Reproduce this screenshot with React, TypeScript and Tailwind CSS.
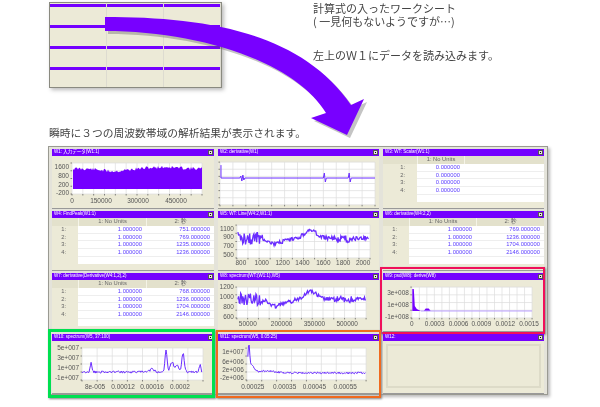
import React from "react";

const P = "#7400ff";
const L = "#6a2cff";
const ARROW = "M105 17 C 200 17 300 30 351 105 L364 99 L347 135 L311 118 L326 113 C 295 62 200 31 105 31 Z";

function rng(seed: number) {
  let s = seed;
  return () => {
    s = (s * 9301 + 49297) % 233280;
    return s / 233280;
  };
}

function Close() {
  return (
    <span className="flex h-[5px] w-[5px] items-center justify-center border border-[#555] bg-[#e8e6d8]">
      <span className="h-px w-px bg-black" />
    </span>
  );
}

function Panel({
  title,
  ring,
  children,
}: {
  title: string;
  ring?: string;
  children: React.ReactNode;
}) {
  return (
    <div className="relative flex min-h-0 flex-col bg-[#ecead7] shadow-[0_1px_0_#999]">
      <div className="flex h-[7px] shrink-0 items-center justify-between overflow-hidden bg-[#7400ff] pl-[2px] pr-px text-[4.5px] leading-none text-white">
        <span className="whitespace-nowrap">{title}</span>
        <Close />
      </div>
      <div className="min-h-0 flex-1 overflow-hidden">{children}</div>
      {ring && <div className={`pointer-events-none absolute shadow-[1px_1px_2px_#888] ${ring}`} />}
    </div>
  );
}

function DataTable({
  rows,
  col2 = true,
  widths,
}: {
  rows: string[][];
  col2?: boolean;
  widths: string;
}) {
  return (
    <div className={`grid h-full content-start text-[5.8px] leading-[7.7px] ${widths}`}>
      <div className="h-[8px] bg-[#e3e1cc]" />
      <div className="h-[8px] border-l border-[#f5f4e8] bg-[#e3e1cc] text-center text-[#666]">1: No Units</div>
      <div className="h-[8px] border-l border-[#f5f4e8] bg-[#e3e1cc] text-center text-[#666]">{col2 ? "2: 秒" : ""}</div>
      {rows.map((r, i) => (
        <React.Fragment key={i}>
          <div className="h-[7.7px] bg-[#ecead7] pr-[12px] text-right text-[#666]">{i + 1}:</div>
          <div className="h-[7.7px] border-b border-[#eeeeee] bg-white pr-[4px] text-right text-[#5a3cff]">{r[0]}</div>
          <div className="h-[7.7px] border-b border-[#eeeeee] bg-white pr-[4px] text-right text-[#5a3cff]">{r[1]}</div>
        </React.Fragment>
      ))}
      <div className="h-[7px] bg-[#ecead7]" />
      <div className="h-[7px] bg-white" />
      <div className="h-[7px] bg-white" />
    </div>
  );
}

type ChartProps = {
  plot: [number, number, number, number];
  yl: [string, number][];
  xl: [string, number][];
  xy: number;
  grid?: [number, number];
  children?: React.ReactNode;
};

function Chart({ plot, yl, xl, xy, grid = [8, 4], children }: ChartProps) {
  const [x0, y0, x1, y1] = plot;
  const gx = Array.from({ length: grid[0] + 1 }, (_, i) => x0 + ((x1 - x0) * i) / grid[0]);
  const gy = Array.from({ length: grid[1] + 1 }, (_, i) => y0 + ((y1 - y0) * i) / grid[1]);
  return (
    <svg viewBox="0 0 162 52" className="block h-[52px] w-full">
      <rect x={x0} y={y0} width={x1 - x0} height={y1 - y0} fill="#fff" />
      {gx.map((x, i) => (
        <line key={i} x1={x} x2={x} y1={y0} y2={y1} stroke="#dddddd" strokeWidth="0.7" />
      ))}
      {gy.map((y, i) => (
        <line key={i} x1={x0} x2={x1} y1={y} y2={y} stroke="#dddddd" strokeWidth="0.7" />
      ))}
      {gx.map((x, i) => (
        <line key={i} x1={x} x2={x} y1={y1} y2={y1 + 1.5} stroke="#555" strokeWidth="0.7" />
      ))}
      {gy.map((y, i) => (
        <line key={i} x1={x0 - 1.5} x2={x0} y1={y} y2={y} stroke="#555" strokeWidth="0.7" />
      ))}
      {children}
      {yl.map(([t, y]) => (
        <text key={t} x={x0 - 3} y={y + 2.2} textAnchor="end" fontSize="6.5" fill="#555">
          {t}
        </text>
      ))}
      {xl.map(([t, x]) => (
        <text key={t} x={x} y={xy + 2.2} textAnchor="middle" fontSize="6.5" fill="#555">
          {t}
        </text>
      ))}
    </svg>
  );
}

const r1 = rng(11);
const areaTop: string[] = [];
for (let x = 21; x <= 150; x += 1) {
  const base = 11 + 2.5 * Math.exp(-Math.pow((x - 62) / 18, 2)) - 1.5 * Math.exp(-Math.pow((x - 112) / 20, 2));
  areaTop.push(`${x},${(base + r1() * 3.2).toFixed(1)}`);
}
const areaPts = `21,33 ${areaTop.join(" ")} 150,33`;

const wander = (seed: number, x0: number, x1: number, base: (x: number) => number, amp: (x: number) => number) => {
  const r = rng(seed);
  const out: string[] = [];
  for (let x = x0; x <= x1; x += 0.7) {
    out.push(`${x.toFixed(1)},${(base(x) + (r() - 0.5) * amp(x)).toFixed(1)}`);
  }
  return out.join(" ");
};

const bump = (x: number, c: number, w: number, h: number) => h * Math.exp(-Math.pow((x - c) / w, 2));

const w5Pts = wander(
  21,
  20,
  152,
  (x) => 20 + bump(x, 57, 8, 6) - bump(x, 93, 8, 8) + bump(x, 128, 12, 1) + bump(x, 70, 8, 2),
  (x) => (x < 45 ? 13 : x > 120 && x < 135 ? 8 : 4),
);
const w7Pts = wander(
  33,
  20,
  149,
  (x) => 19 + bump(x, 57, 8, 7) - bump(x, 93, 8, 8) + bump(x, 128, 12, 1) + bump(x, 70, 8, 3),
  (x) => (x < 45 ? 13 : x > 120 && x < 135 ? 8 : 4),
);
const w8Pts = wander(
  44,
  30,
  150,
  (x) =>
    31 -
    bump(x, 39, 1.2, 9) -
    bump(x, 114, 1.5, 22) -
    bump(x, 120, 2.5, 10) -
    bump(x, 125, 2, 7) -
    bump(x, 131, 1.8, 19) -
    bump(x, 148, 1.2, 7) -
    bump(x, 100, 3, 3),
  () => 2.2,
);
const w11Pts = wander(
  55,
  30,
  149,
  (x) => 32 - bump(x, 31, 1.2, 23) - bump(x, 33, 4, 8) - bump(x, 48, 12, 2),
  () => 1.8,
);

const w4 = [
  ["1.000000", "751.000000"],
  ["1.000000", "769.000000"],
  ["1.000000", "1235.000000"],
  ["1.000000", "1236.000000"],
];
const w6 = [
  ["1.000000", "769.000000"],
  ["1.000000", "1236.000000"],
  ["1.000000", "1704.000000"],
  ["1.000000", "2146.000000"],
];
const w3 = [
  ["0.000000", ""],
  ["0.000000", ""],
  ["0.000000", ""],
  ["0.000000", ""],
];

export default function App() {
  return (
    <div
      className="relative h-[407px] w-[600px] overflow-hidden bg-white blur-[0.3px]"
      style={{ fontFamily: '"Liberation Sans", "Noto Sans CJK JP", sans-serif' }}
    >
      <div className="flex h-[125px] items-start pl-[49px] pt-[2px]">
        <div className="grid h-[86px] w-[173px] grid-cols-3 grid-rows-4 border border-[#8a8a80] bg-[#ecead7] shadow-[2px_2px_4px_#bbb]">
          {Array.from({ length: 12 }, (_, i) => (
            <div key={i} className="border-r border-[#dddbd0] pt-px">
              <div className="h-[3px] bg-[#7400ff]" />
            </div>
          ))}
        </div>
        <div className="ml-[91px] text-[11px] leading-[13px] text-[#444]" style={{ fontFamily: '"Noto Sans CJK JP", sans-serif' }}>
          <p>計算式の入ったワークシート</p>
          <p>( 一見何もないようですが…)</p>
          <p className="mt-[21px]">左上のＷ１にデータを読み込みます。</p>
        </div>
      </div>

      <p
        className="pl-[49px] text-[10.75px] leading-[16px] text-[#444]"
        style={{ fontFamily: '"Noto Sans CJK JP", sans-serif' }}
      >
        瞬時に３つの周波数帯域の解析結果が表示されます。
      </p>

      <div className="ml-[48px] mt-[5px] grid h-[249px] w-[500px] grid-cols-[162px_161px_161px] grid-rows-[59px_59px_58px_59px] gap-x-[4px] gap-y-[3px] border border-[#9a9a92] bg-[#e4e3da] pl-[3px] pt-[2px] shadow-[2px_2px_3px_#bbb]">
        <Panel title="W1: 入力データ(W1:1)">
          <Chart
            plot={[20, 7, 150, 38]}
            yl={[["1600", 11], ["800", 20], ["200", 29], ["-200", 37]]}
            xl={[["0", 20], ["150000", 49], ["300000", 86], ["450000", 124]]}
            xy={45}
            grid={[12, 4]}
          >
            <polygon points={areaPts} fill={P} />
          </Chart>
        </Panel>

        <Panel title="W2: derivative(W1)">
          <Chart plot={[2, 6, 158, 49]} yl={[]} xl={[]} xy={0} grid={[12, 6]}>
            <polyline points="3,9 3,22 22,22 23,20 24,25 25,19 26,24 27,22 106,22 107,17 108,26 109,22 131,22 132,17 133,26 134,22 158,22" fill="none" stroke={L} strokeWidth="1" />
          </Chart>
        </Panel>

        <Panel title="W3: WT: Scalar(W1:1)">
          <DataTable rows={w3} col2={false} widths="grid-cols-[34px_47px_1fr]" />
        </Panel>

        <Panel title="W4: FindPeak(W1:1)">
          <DataTable rows={w4} widths="grid-cols-[26px_68px_1fr]" />
        </Panel>

        <Panel title="W5: WT: Line(W4:2,W1:1)">
          <Chart
            plot={[19, 7, 153, 40]}
            yl={[["1100", 11], ["900", 19], ["700", 28], ["500", 37]]}
            xl={[["800", 23], ["1000", 44], ["1200", 65], ["1400", 85], ["1600", 106], ["1800", 126], ["2000", 146]]}
            xy={45}
            grid={[12, 4]}
          >
            <polyline points={w5Pts} fill="none" stroke={L} strokeWidth="1.3" />
          </Chart>
        </Panel>

        <Panel title="W6: derivative(W4:2,2)">
          <DataTable rows={w6} widths="grid-cols-[26px_67px_1fr]" />
        </Panel>

        <Panel title="W7: derivative(Derivative(W4:1,2),2)">
          <DataTable rows={w6.map((r, i) => (i === 0 ? [r[0], "768.000000"] : r))} widths="grid-cols-[26px_68px_1fr]" />
        </Panel>

        <Panel title="W8: spectrum(WT:(W1:1),W5)">
          <Chart
            plot={[19, 7, 149, 38]}
            yl={[["1200", 7], ["1000", 17], ["800", 27], ["600", 37]]}
            xl={[["50000", 30], ["200000", 64], ["350000", 97], ["500000", 130]]}
            xy={44}
            grid={[12, 4]}
          >
            <polyline points={w7Pts} fill="none" stroke={L} strokeWidth="1.3" />
          </Chart>
        </Panel>

        <Panel title="W9: psd(W8): derive(W8)" ring="-top-[6px] -bottom-[3px] -left-[3px] -right-[1px] border-[2px] border-[#f0105a]">
          <Chart
            plot={[29, 7, 150, 38]}
            yl={[["3e+008", 13], ["1e+008", 25], ["-1e+008", 37]]}
            xl={[["0", 29], ["0.0003", 52], ["0.0006", 76], ["0.0009", 99], ["0.0012", 123], ["0.0015", 147]]}
            xy={44}
            grid={[16, 4]}
          >
            <polygon points="29.5,31 29.5,9 31,9 32,26 34,29 38,31" fill={P} />
            <polygon points="41,31 43,28.5 46,28.5 48,31" fill={P} />
            <line x1="38" x2="150" y1="31" y2="31" stroke="#b89cff" strokeWidth="1" />
          </Chart>
        </Panel>

        <Panel title="W10: spectrum(W5, 37:100)" ring="-top-[5px] -bottom-[5px] -left-[4px] -right-[1px] border-[3px] border-[#00e050]">
          <Chart
            plot={[30, 7, 151, 39]}
            yl={[["5e+007", 7], ["3e+007", 17], ["1e+007", 27], ["-1e+007", 37]]}
            xl={[["8e-005", 43], ["0.00012", 71], ["0.00016", 100], ["0.0002", 128]]}
            xy={46}
            grid={[8, 4]}
          >
            <polyline points={w8Pts} fill="none" stroke={L} strokeWidth="1" />
          </Chart>
        </Panel>

        <Panel title="W11: spectrum(W5, 0.05:25)" ring="-top-[4px] -bottom-[5px] -left-[2px] -right-[2px] border-[2px] border-[#f06a1e]">
          <Chart
            plot={[29, 7, 149, 39]}
            yl={[["1e+007", 11], ["6e+006", 21], ["2e+006", 29], ["-2e+006", 37]]}
            xl={[["0.00025", 35], ["0.00035", 67], ["0.00045", 97], ["0.00055", 128]]}
            xy={46}
            grid={[8, 4]}
          >
            <polyline points={w11Pts} fill="none" stroke={L} strokeWidth="1" />
          </Chart>
        </Panel>

        <Panel title="W12:">
          <div className="m-[3px] h-[44px] border-2 border-[#dddbc8]" />
        </Panel>
      </div>

      <svg viewBox="0 0 600 407" className="pointer-events-none absolute left-0 top-0 h-[407px] w-[600px]">
        <path d={ARROW} fill="#555" opacity="0.35" transform="translate(3 3)" />
        <path d={ARROW} fill="#7800ff" />
      </svg>
    </div>
  );
}
